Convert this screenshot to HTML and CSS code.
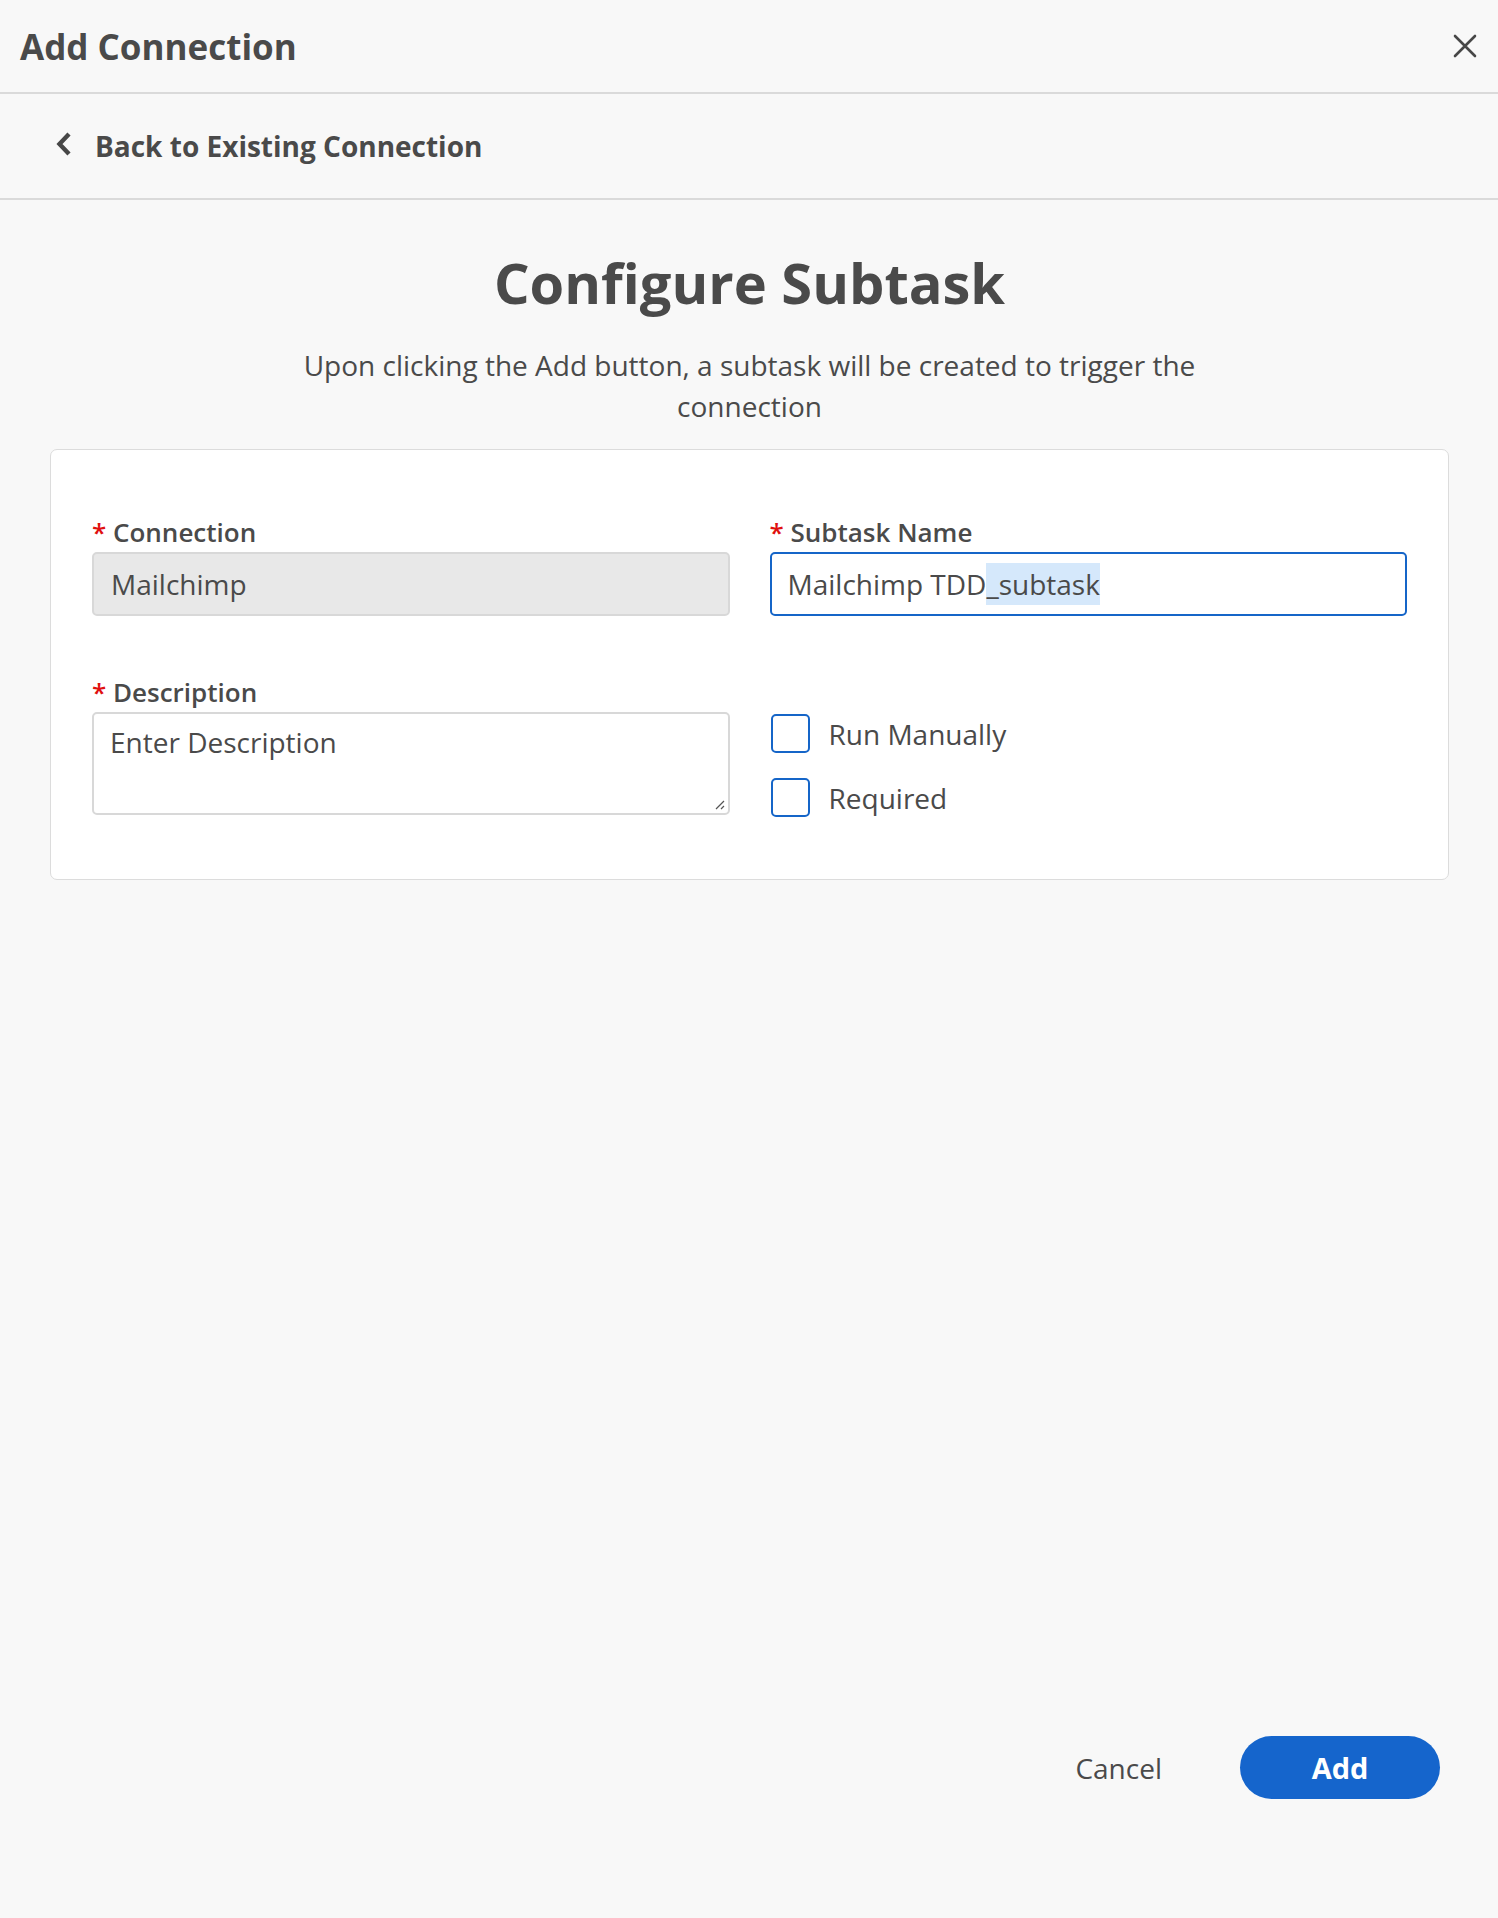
FILE: index.html
```html
<!DOCTYPE html>
<html lang="en">
<head>
<meta charset="utf-8">
<title>Add Connection</title>
<link rel="stylesheet" href="styles.css">
</head>
<body>
<div class="page">
  <header class="topbar">
    <h1 class="topbar-title">Add Connection</h1>
    <button class="close-btn" aria-label="Close">
      <svg width="24" height="24" viewBox="0 0 24 24"><path d="M2 2 L22 22 M22 2 L2 22" stroke="#474747" stroke-width="2.6" stroke-linecap="round" fill="none"/></svg>
    </button>
  </header>
  <div class="backbar">
    <a class="back-link" href="#">
      <svg width="18" height="26" viewBox="0 0 18 26"><path d="M14 3 L4.5 13 L14 23" stroke="#474747" stroke-width="4.4" fill="none" stroke-linejoin="miter"/></svg>
      <span>Back to Existing Connection</span>
    </a>
  </div>
  <main class="content">
    <h2 class="title">Configure Subtask</h2>
    <p class="subtitle">Upon clicking the Add button, a subtask will be created to trigger the connection</p>
    <section class="card">
      <div class="field">
        <label class="label"><span class="req">*</span> Connection</label>
        <div class="input input-disabled">Mailchimp</div>
      </div>
      <div class="field">
        <label class="label"><span class="req">*</span> Subtask Name</label>
        <div class="input input-focus">Mailchimp TDD<span class="sel">_subtask</span></div>
      </div>
      <div class="field">
        <label class="label"><span class="req">*</span> Description</label>
        <div class="textarea">
          <span class="placeholder">Enter Description</span>
          <svg class="grip" width="14" height="14" viewBox="0 0 14 14"><path d="M12 4 L4 12 M12 9 L9 12" stroke="#555" stroke-width="1.2" fill="none"/></svg>
        </div>
      </div>
      <div class="field checks">
        <label class="check"><span class="box"></span><span>Run Manually</span></label>
        <label class="check"><span class="box"></span><span>Required</span></label>
      </div>
    </section>
  </main>
  <footer class="actions">
    <button class="btn-cancel">Cancel</button>
    <button class="btn-add">Add</button>
  </footer>
</div>
</body>
</html>
```
FILE: styles.css
```css
* { box-sizing: border-box; }
html, body { margin: 0; padding: 0; }
body {
  background: #f8f8f8;
  font-family: "Open Sans", "Noto Sans", sans-serif;
  color: #4a4a4a;
}
.page {
  min-height: 1918px;
  display: flex;
  flex-direction: column;
}
.topbar {
  height: 94px;
  border-bottom: 2px solid #dadada;
  display: flex;
  align-items: center;
  justify-content: space-between;
  padding: 0 20px 0 20px;
}
.topbar-title {
  margin: 0;
  font-size: 35px;
  font-weight: 700;
  color: #4a4a4a;
}
.close-btn {
  background: none;
  border: none;
  padding: 0;
  width: 24px;
  height: 24px;
  margin-right: 1px;
  display: flex;
}
.backbar {
  height: 106px;
  border-bottom: 2px solid #dadada;
  display: flex;
  align-items: center;
  padding-left: 55px;
}
.back-link {
  display: flex;
  align-items: center;
  gap: 22px;
  text-decoration: none;
  color: #4a4a4a;
  font-size: 28px;
  font-weight: 700;
}
.back-link svg { margin-top: -4px; }
.content {
  flex: 1;
  padding: 0 49px 0 50px;
  display: flex;
  flex-direction: column;
  align-items: center;
}
.title {
  margin: 44px 0 0;
  font-size: 56px;
  font-weight: 700;
  color: #4a4a4a;
}
.subtitle {
  margin: 25px 0 0;
  max-width: 920px;
  text-align: center;
  font-size: 28px;
  line-height: 41px;
  color: #4a4a4a;
}
.card {
  margin-top: 22px;
  width: 100%;
  background: #fff;
  border: 1px solid #dcdcdc;
  border-radius: 7px;
  padding: 65px 41px 62px;
  display: grid;
  grid-template-columns: 1fr 1fr;
  column-gap: 40px;
  row-gap: 59px;
}
.field { display: flex; flex-direction: column; }
.label {
  font-size: 26px;
  font-weight: 600;
  line-height: 34px;
  margin-bottom: 3px;
  color: #4a4a4a;
}
.req { color: #e0100f; font-weight: 600; }
.input {
  height: 64px;
  border-radius: 5px;
  border: 1px solid #d4d4d4;
  padding: 0 17px;
  display: flex;
  align-items: center;
  font-size: 28px;
  color: #4a4a4a;
  background: #fff;
}
.input-disabled { background: #e8e8e8; border: 2px solid #d8d8d8; }
.input-focus { border: 2px solid #1565c8; padding-left: 16px; }
.sel { background: #d5e8fb; line-height: 42px; }
.textarea {
  position: relative;
  height: 103px;
  border: 2px solid #d8d8d8;
  border-radius: 5px;
  padding: 9px 16px;
  font-size: 28px;
  color: #4a4a4a;
}
.grip { position: absolute; right: 2px; bottom: 2px; }
.checks { padding-top: 39px; gap: 25px; }
.check {
  display: flex;
  align-items: center;
  gap: 19px;
  height: 39px;
  font-size: 28px;
  color: #4a4a4a;
}
.box {
  width: 39px;
  height: 39px;
  border: 2px solid #1565c8;
  border-radius: 5px;
  background: #fff;
  margin-left: 1px;
}
.actions {
  display: flex;
  justify-content: flex-end;
  align-items: center;
  gap: 78px;
  padding: 0 58px 119px 0;
}
.btn-cancel {
  background: none;
  border: none;
  font-family: inherit;
  font-size: 28px;
  color: #4a4a4a;
  padding: 0;
}
.btn-add {
  width: 200px;
  height: 63px;
  border-radius: 32px;
  border: none;
  background: #1565cc;
  color: #fff;
  font-family: inherit;
  font-size: 29px;
  font-weight: 700;
}
```
